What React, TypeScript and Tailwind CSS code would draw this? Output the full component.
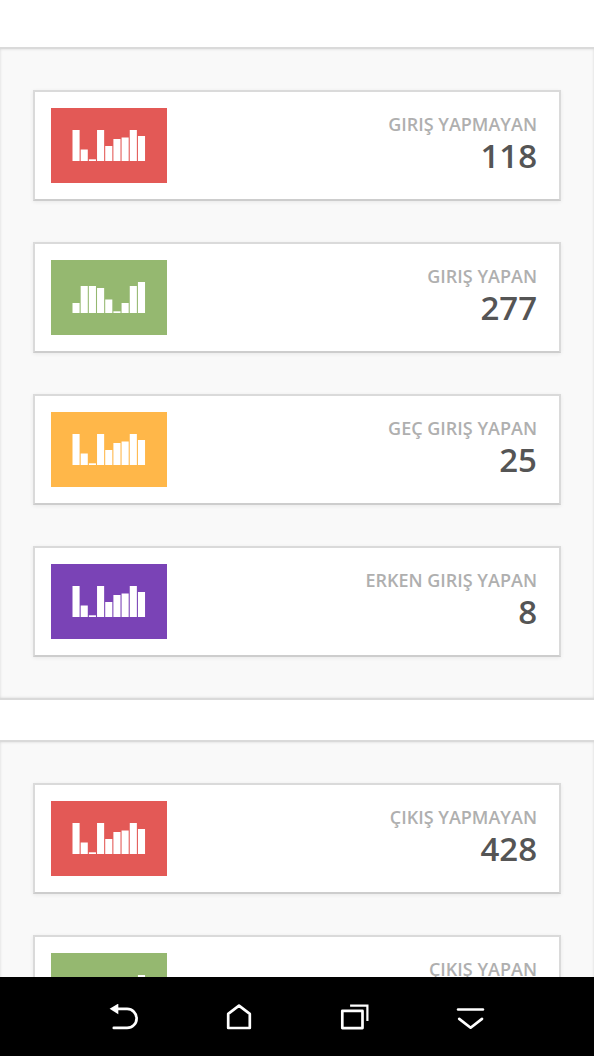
import React from 'react'

interface Stat {
  label: string;
  value?: number;
  color: string;
  bars: number[];
}

const falling = [31, 11.5, 1.7, 31, 15, 22, 23.5, 31, 25];
const rising = [10, 27, 27, 25, 13.5, 1.7, 10, 27, 31];

const entryStats: Stat[] = [
  { label: 'GIRIŞ YAPMAYAN', value: 118, color: 'bg-[#e35956]', bars: falling },
  { label: 'GIRIŞ YAPAN', value: 277, color: 'bg-[#95b870]', bars: rising },
  { label: 'GEÇ GIRIŞ YAPAN', value: 25, color: 'bg-[#ffb749]', bars: falling },
  { label: 'ERKEN GIRIŞ YAPAN', value: 8, color: 'bg-[#7a43b6]', bars: falling },
];

const exitStats: Stat[] = [
  { label: 'ÇIKIŞ YAPMAYAN', value: 428, color: 'bg-[#e35956]', bars: falling },
  { label: 'ÇIKIŞ YAPAN', color: 'bg-[#95b870]', bars: rising },
];

const Bars = ({ bars }: { bars: number[] }) => (
  <svg width="74" height="31" viewBox="0 0 74 31" fill="#fff" aria-hidden="true">
    {bars.map((h, i) => (
      <rect key={i} x={0.5 + i * 8.18} y={31 - h} width="7.1" height={h} />
    ))}
  </svg>
);

const StatCard = ({ stat }: { stat: Stat }) => (
  <li className="flex justify-between border-2 border-[#dadada] border-b-[#cdcdcd] bg-white py-4 pl-4 pr-[22px] shadow-[0_1px_4px_rgba(0,0,0,0.07)]">
    <div className={`flex h-[75px] w-[116px] items-center justify-center ${stat.color}`}>
      <Bars bars={stat.bars} />
    </div>
    <div className="pt-1 text-right font-semibold">
      <h3 className="text-[18px] leading-6 text-[#afafaf]">{stat.label}</h3>
      {stat.value !== undefined && (
        <p className="text-[33px] leading-10 text-[#555555]">{stat.value}</p>
      )}
    </div>
  </li>
);

const StatGroup = ({ stats }: { stats: Stat[] }) => (
  <section className="border-y-2 border-[#dadada] bg-[#f9f9f9] px-[33px] py-[41px] shadow-[inset_0_0_3px_rgba(0,0,0,0.15)]">
    <ul className="flex flex-col gap-[41px]">
      {stats.map((stat) => (
        <StatCard key={stat.label} stat={stat} />
      ))}
    </ul>
  </section>
);

const NavButton = ({ label, children }: { label: string; children: React.ReactNode }) => (
  <button type="button" aria-label={label} className="flex items-center justify-center">
    <svg width="30" height="26" viewBox="0 0 30 26" fill="none" stroke="#fff" strokeWidth="2.7" strokeLinecap="round" strokeLinejoin="round">
      {children}
    </svg>
  </button>
);

const App = () => {
  return (
    <div className="flex h-screen flex-col bg-white font-['Open_Sans',sans-serif]">
      <main className="min-h-0 flex-1 overflow-y-auto pt-[47px] [scrollbar-width:none]">
        <div className="flex flex-col gap-10">
          <StatGroup stats={entryStats} />
          <StatGroup stats={exitStats} />
        </div>
      </main>

      <nav className="grid h-[79px] shrink-0 grid-cols-4 bg-black px-[11%]">
        <NavButton label="Geri">
          <path d="M1.6 4.8 10.3-.4v10.6Z" fill="#fff" stroke="none" />
          <path d="M9.5 4.9h9.6a9.5 9.5 0 0 1 0 19H5.8" />
        </NavButton>
        <NavButton label="Ana ekran">
          <path d="M4.2 24V9.9L15 1.7 25.8 9.9V24Z" />
        </NavButton>
        <NavButton label="Son uygulamalar">
          <path d="M2.3 6.9h20.2v17.2H2.3Z" />
          <path d="M11.2 1.7h16.2v14.2" strokeWidth="2.2" strokeLinecap="square" strokeLinejoin="miter" />
        </NavButton>
        <NavButton label="Gizle">
          <path d="M2 5.5h25" strokeWidth="2.4" />
          <path d="M3.2 14.9l11.4 8.8 11.4-8.8" />
        </NavButton>
      </nav>
    </div>
  )
}

export default App
